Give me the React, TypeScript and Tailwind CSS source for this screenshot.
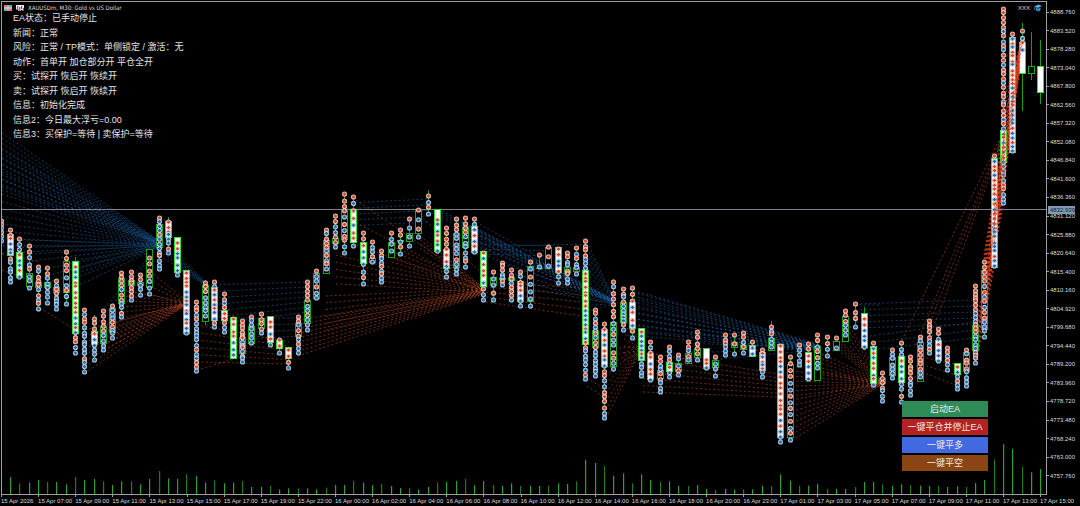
import React from "react";

type Body = "none" | "bull" | "bear";
// [first marker, last marker, body top, body bottom, body kind, marker step]
type Candle = [number, number, number, number, Body, number];

const STEP = 9.28;
const ORIGIN = 1.3;
const BASE = 494;
const xOf = (i: number) => ORIGIN + STEP * i;

const candles: Candle[] = [
  [221, 241, 0, 0, "none", 4],
  [230, 282, 234, 255, "bear", 4.6],
  [239, 277, 252, 277, "bear", 5],
  [246, 288, 273, 286, "bull", 5.5],
  [267, 309, 282, 287, "bull", 4.6],
  [268, 303, 282, 287, "bull", 5],
  [281, 309, 287, 292, "bull", 4],
  [252, 304, 261, 292, "bull", 6.4],
  [267, 353, 261, 333, "bear", 4.8],
  [310, 372, 0, 0, "none", 4.4],
  [319, 360, 331, 344, "bear", 5],
  [311, 350, 326, 343, "bull", 4.6],
  [306, 338, 308, 332, "bull", 4],
  [273, 317, 278, 303, "bull", 4.4],
  [272, 300, 280, 285, "bull", 4],
  [275, 295, 282, 285, "bull", 5],
  [258, 294, 249, 287, "bull", 6],
  [218, 269, 224, 247, "bull", 4],
  [222, 253, 221, 237, "bear", 4],
  [243, 275, 237, 272, "bear", 4.8],
  [273, 333, 270, 333, "bear", 4.6],
  [302, 371, 0, 0, "none", 4.2],
  [283, 316, 285, 321, "bull", 4.6],
  [282, 327, 287, 320, "bear", 4.4],
  [294, 332, 310, 320, "bear", 4.4],
  [319, 355, 317, 358, "bear", 5.4],
  [321, 362, 337, 353, "bull", 3.4],
  [317, 343, 326, 343, "bull", 4],
  [314, 333, 318, 328, "bull", 4],
  [322, 345, 316, 342, "bear", 4.8],
  [340, 353, 340, 348, "bear", 5],
  [350, 368, 347, 358, "bear", 5],
  [317, 353, 323, 336, "bull", 4.4],
  [282, 330, 300, 323, "bull", 4.4],
  [271, 298, 273, 298, "bull", 4.6],
  [230, 269, 240, 273, "bull", 4],
  [216, 247, 238, 243, "bull", 4.8],
  [194, 253, 209, 239, "bull", 5.4],
  [197, 246, 209, 242, "bear", 6.6],
  [233, 284, 242, 263, "bear", 6],
  [242, 262, 258, 262, "bull", 5],
  [251, 282, 0, 0, "none", 3.8],
  [233, 251, 242, 257, "bull", 4.6],
  [230, 254, 240, 241, "bull", 5],
  [219, 246, 233, 241, "bull", 7],
  [210, 237, 209, 233, "bull", 8],
  [196, 214, 209, 209, "bull", 6],
  [220, 251, 209, 251, "bear", 4.6],
  [228, 277, 249, 268, "bear", 5.4],
  [219, 274, 233, 267, "bull", 5],
  [218, 267, 227, 247, "bull", 4.6],
  [219, 252, 226, 252, "bear", 5],
  [253, 300, 251, 286, "bear", 5.4],
  [272, 300, 277, 285, "bull", 6],
  [263, 285, 278, 279, "bull", 3.6],
  [270, 300, 277, 280, "bull", 3.8],
  [272, 306, 281, 301, "bear", 4.6],
  [262, 306, 266, 301, "bull", 7],
  [255, 267, 268, 268, "bull", 11],
  [247, 266, 247, 268, "bull", 9],
  [249, 283, 247, 272, "bear", 5],
  [253, 283, 267, 273, "bull", 3.8],
  [248, 274, 267, 271, "bull", 4.6],
  [241, 379, 270, 344, "bear", 4.6],
  [310, 376, 330, 347, "bull", 4],
  [324, 418, 329, 366, "bear", 5],
  [282, 369, 322, 366, "bull", 5.6],
  [289, 330, 302, 322, "bull", 4],
  [288, 338, 302, 328, "bear", 5.6],
  [332, 376, 328, 360, "bear", 4.2],
  [342, 380, 353, 379, "bear", 4.8],
  [357, 392, 370, 378, "bull", 4],
  [347, 377, 362, 371, "bear", 3.8],
  [355, 375, 363, 371, "bull", 5],
  [342, 360, 353, 363, "bull", 4],
  [332, 360, 348, 357, "bull", 5],
  [360, 368, 348, 368, "bear", 4],
  [357, 376, 360, 367, "bull", 6],
  [335, 355, 0, 0, "none", 4],
  [335, 354, 342, 347, "bull", 8],
  [333, 353, 345, 349, "bull", 4.6],
  [342, 354, 345, 356, "bear", 5.6],
  [350, 377, 352, 370, "bear", 3.8],
  [327, 347, 338, 350, "bull", 4],
  [346, 442, 344, 437, "bear", 5.2],
  [357, 440, 364, 437, "bull", 6],
  [345, 365, 0, 0, "none", 4.6],
  [344, 379, 352, 379, "bear", 5.6],
  [335, 368, 346, 380, "bull", 5],
  [337, 356, 0, 0, "none", 6],
  [338, 348, 341, 350, "bull", 9],
  [311, 335, 316, 341, "bull", 4.2],
  [304, 327, 0, 0, "none", 7],
  [319, 347, 313, 347, "bear", 5.2],
  [343, 385, 346, 383, "bear", 5.2],
  [373, 401, 378, 383, "bull", 4.6],
  [350, 378, 357, 375, "bull", 4.4],
  [343, 402, 356, 382, "bear", 5.4],
  [357, 395, 0, 0, "none", 4],
  [337, 377, 342, 381, "bull", 4.4],
  [321, 353, 0, 0, "none", 3.8],
  [329, 361, 340, 360, "bear", 5],
  [348, 370, 0, 0, "none", 3.8],
  [367, 389, 363, 374, "bear", 4.4],
  [350, 386, 352, 371, "bull", 4.2],
  [286, 363, 325, 350, "bull", 3.8],
  [262, 337, 270, 329, "bull", 5],
  [156, 266, 158, 267, "bear", 4.6],
  [9, 203, 130, 162, "bear", 4.6],
  [34, 151, 37, 152, "bear", 4.4],
  [31, 50, 42, 73, "bear", 6],
  [0, -1, 66, 73, "bull", 4],
  [0, -1, 66, 92, "bear", 4],
];

const wicks: Record<number, [number, number]> = {
  8: [257, 261], 10: [315, 362], 16: [249, 295], 18: [217, 254], 22: [280, 325],
  39: [231, 286], 46: [190, 215], 66: [279, 372], 68: [286, 340], 83: [321, 350],
  93: [307, 350], 110: [23, 111], 111: [32, 80], 112: [40, 104],
};

const volumes = [
  111, 130, 128, 120, 126, 126, 133, 111, 120, 117, 124, 135, 124, 124, 133, 117, 93, 115, 117, 103,
  108, 128, 121, 130, 128, 123, 141, 141, 137, 148, 145, 145, 145, 148, 143, 135, 135, 123, 128, 135,
  132, 138, 144, 144, 148, 141, 128, 126, 123, 117, 135, 123, 135, 138, 130, 138, 137, 138, 137, 130,
  132, 124, 60, 69, 79, 108, 100, 130, 103, 120, 126, 124, 138, 138, 135, 147, 150, 147, 148, 148,
  148, 137, 138, 103, 122, 137, 137, 132, 147, 147, 147, 141, 126, 126, 133, 137, 133, 135, 137, 138,
  138, 141, 139, 141, 129, 120, 58, 12, 26, 80, 97, 87,
].map((v) => 440 + v / 3);

type Side = "buy" | "sell";
// Lines spread evenly between two segments: x1, y1 range, x2, y2 range.
type Fan = [Side, number, number, number, number, number, number, number];

const fans: Fan[] = [
  ["buy", 2, 133, 190, 158, 240, 243, 12],
  ["buy", 2, 150, 253, 158, 243, 246, 15],
  ["buy", 22, 240, 262, 158, 244, 246, 4],
  ["buy", 40, 270, 285, 158, 246, 247, 3],
  ["buy", 68, 262, 290, 158, 246, 248, 4],
  ["buy", 96, 318, 325, 158, 246, 248, 2],
  ["buy", 160, 238, 256, 205, 281, 284, 5],
  ["buy", 178, 258, 268, 205, 283, 285, 4],
  ["sell", 85, 330, 373, 186, 303, 305, 8],
  ["sell", 104, 326, 350, 186, 303, 305, 5],
  ["sell", 122, 290, 318, 186, 302, 305, 6],
  ["sell", 150, 272, 294, 186, 300, 304, 4],
  ["sell", 40, 308, 310, 76, 330, 332, 1],
  ["sell", 2, 254, 270, 40, 262, 284, 2],
  ["buy", 206, 285, 325, 308, 282, 312, 7],
  ["buy", 230, 318, 340, 300, 318, 336, 4],
  ["sell", 197, 325, 362, 289, 342, 364, 6],
  ["sell", 197, 370, 371, 245, 356, 358, 1],
  ["sell", 298, 320, 356, 484, 290, 294, 9],
  ["sell", 326, 296, 330, 484, 289, 293, 6],
  ["sell", 336, 255, 284, 484, 289, 292, 5],
  ["sell", 356, 200, 245, 484, 288, 291, 3],
  ["sell", 392, 246, 262, 484, 288, 291, 4],
  ["sell", 420, 236, 248, 484, 288, 291, 4],
  ["sell", 420, 215, 222, 484, 275, 288, 1],
  ["buy", 346, 203, 226, 428, 199, 222, 5],
  ["buy", 438, 209, 216, 614, 300, 303, 4],
  ["buy", 457, 220, 236, 614, 300, 303, 5],
  ["buy", 476, 222, 252, 614, 300, 303, 6],
  ["buy", 503, 264, 284, 614, 301, 304, 4],
  ["buy", 587, 242, 312, 614, 299, 304, 12],
  ["buy", 476, 244, 254, 552, 246, 256, 3],
  ["buy", 500, 246, 247, 586, 244, 246, 1],
  ["sell", 486, 282, 302, 582, 288, 316, 5],
  ["sell", 606, 350, 418, 640, 346, 352, 9],
  ["sell", 624, 310, 360, 641, 343, 352, 8],
  ["sell", 587, 378, 386, 606, 390, 398, 2],
  ["buy", 625, 288, 335, 815, 343, 350, 9],
  ["buy", 634, 292, 332, 815, 344, 350, 7],
  ["buy", 690, 334, 362, 815, 346, 350, 4],
  ["buy", 770, 338, 346, 815, 347, 350, 3],
  ["buy", 855, 305, 306, 880, 305, 306, 1],
  ["sell", 643, 352, 392, 778, 374, 397, 7],
  ["sell", 792, 400, 440, 880, 383, 386, 8],
  ["sell", 792, 366, 396, 880, 382, 385, 7],
  ["sell", 818, 352, 372, 880, 381, 384, 5],
  ["sell", 838, 338, 350, 880, 380, 384, 5],
  ["sell", 850, 326, 346, 880, 378, 383, 4],
  ["buy", 856, 304, 328, 975, 300, 324, 5],
  ["buy", 870, 336, 350, 975, 322, 338, 3],
  ["sell", 902, 340, 344, 1003, 132, 134, 1],
  ["sell", 916, 345, 350, 1003, 134, 138, 1],
  ["sell", 930, 322, 336, 1003, 138, 142, 2],
  ["sell", 904, 372, 386, 924, 362, 370, 2],
  ["sell", 922, 357, 372, 958, 365, 386, 3],
  ["sell", 977, 320, 360, 995, 230, 262, 9],
  ["sell", 984, 255, 310, 1004, 136, 200, 14],
  ["sell", 995, 165, 250, 1021, 40, 60, 12],
  ["sell", 1004, 100, 180, 1022, 40, 52, 9],
  ["buy", 1003, 60, 150, 1013, 50, 130, 6],
];

const linesOf = ([side, x1, a1, b1, x2, a2, b2, n]: Fan) =>
  Array.from({ length: n }, (_, k) => {
    const t = n === 1 ? 0 : k / (n - 1);
    return { side, x1, y1: a1 + (b1 - a1) * t, x2, y2: a2 + (b2 - a2) * t };
  });

const noise = (a: number, b: number) => {
  const v = Math.sin(a * 12.9898 + b * 78.233) * 43758.5453;
  return v - Math.floor(v);
};

const markersOf = (c: Candle, i: number) => {
  const [first, last, , , , step] = c;
  const out: { y: number; side: Side }[] = [];
  const n = Math.floor((last - first) / step);
  if (last < first) return out;
  for (let k = 0; k <= n; k++) {
    const t = n === 0 ? 0 : k / n;
    const inner = k > 0 && k < n;
    const y = first + (last - first) * t + (inner ? (noise(i, k) - 0.5) * 2.4 : 0);
    const side: Side = k === 0 ? "sell" : k === n ? "buy" : noise(k, i + 3) > 0.25 + t * 0.5 ? "sell" : "buy";
    out.push({ y, side });
  }
  return out;
};

function Marker({ x, y, side }: { x: number; y: number; side: Side }) {
  const sell = side === "sell";
  return (
    <g>
      <circle cx={x} cy={y} r={2.6} fill={sell ? "#f0cfc4" : "#b8d6ee"} opacity={0.92} />
      <path
        d={`M${x - 1.7} ${y}h3.4M${x} ${y - 1.5}v3`}
        stroke={sell ? "#d2452c" : "#2468a8"}
        strokeWidth={1.3}
      />
    </g>
  );
}

function Chart() {
  return (
    <svg
      className="absolute inset-0 h-full w-full"
      viewBox="2 2 1044 492"
      preserveAspectRatio="none"
      role="img"
      aria-label="XAUUSDm M30"
    >
      <g strokeWidth={1} strokeDasharray="2 2.4" fill="none">
        {fans.flatMap(linesOf).map((l, k) => (
          <line
            key={k}
            x1={l.x1}
            y1={l.y1}
            x2={l.x2}
            y2={l.y2}
            stroke={l.side === "buy" ? "#1a5c9c" : l.x1 > 970 ? "#e0401c" : "#b04420"}
            opacity={l.x1 > 970 ? 0.85 : 0.66}
          />
        ))}
      </g>
      <g fill="#30a030">
        {volumes.map((y, k) => (
          <rect key={k} x={Math.round(xOf(k + 1) - 0.5)} y={y} width={1.2} height={BASE - y} opacity={k % 3 === 1 ? 0.75 : 1} />
        ))}
      </g>
      <line x1={1} x2={1047} y1={209.5} y2={209.5} stroke="#7c8088" />
      {candles.map((c, i) => {
        const x = Math.round(xOf(i) - 0.5) + 0.5;
        const [first, last, top, bottom, kind] = c;
        const [w1, w2] = wicks[i] ?? [last > first ? first - 1 : top, last > first ? last + 2 : bottom];
        return (
          <g key={i}>
            <line x1={x} x2={x} y1={w1} y2={w2} stroke="#169c16" />
            {kind !== "none" && (
              <g>
                <rect
                  x={x - 3.5}
                  y={top}
                  width={7}
                  height={Math.max(bottom - top + 1, 1)}
                  fill={kind === "bear" ? "#2fe02f" : "#1ca41c"}
                />
                {bottom - top > 1 && (
                  <rect
                    x={x - 2.5}
                    y={top + 1}
                    width={5}
                    height={bottom - top - 1}
                    fill={kind === "bear" ? "#ffffff" : "#000000"}
                  />
                )}
              </g>
            )}
            {markersOf(c, i).map((m, k) => (
              <Marker key={k} x={x} y={m.y} side={m.side} />
            ))}
          </g>
        );
      })}
      <g stroke="#e2451c" strokeDasharray="2 2" opacity={0.8}>
        <path d="M978 335L1004 140M986 300L1005 130M990 262L1006 122M994 245L1016 90M996 215L1021 45M1000 180L1021 42M1006 150L1022 44" fill="none" />
      </g>
    </svg>
  );
}

const statusLines = [
  "EA状态：已手动停止",
  "新闻：正常",
  "风险：正常 / TP模式：单侧锁定 / 激活：无",
  "动作：首单开 加仓部分开 平仓全开",
  "买：试探开 恢启开 恢续开",
  "卖：试探开 恢启开 恢续开",
  "信息：初始化完成",
  "信息2：今日最大浮亏=0.00",
  "信息3：买保护=等待 | 卖保护=等待",
];

const actions = [
  { label: "启动EA", tone: "bg-[#2e8b57]" },
  { label: "一键平仓并停止EA", tone: "bg-[#b22222]" },
  { label: "一键平多", tone: "bg-[#4169e1]" },
  { label: "一键平空", tone: "bg-[#8b4513]" },
];

const prices = Array.from({ length: 26 }, (_, k) => (4888.76 - 5.24 * k).toFixed(3));

const times = [
  "15 Apr 2026", "15 Apr 07:00", "15 Apr 09:00", "15 Apr 11:00", "15 Apr 13:00", "15 Apr 15:00",
  "15 Apr 17:00", "15 Apr 19:00", "15 Apr 22:00", "16 Apr 00:00", "16 Apr 02:00", "16 Apr 04:00",
  "16 Apr 06:00", "16 Apr 08:00", "16 Apr 10:00", "16 Apr 12:00", "16 Apr 14:00", "16 Apr 16:00",
  "16 Apr 18:00", "16 Apr 20:00", "16 Apr 23:00", "17 Apr 01:00", "17 Apr 03:00", "17 Apr 05:00",
  "17 Apr 07:00", "17 Apr 09:00", "17 Apr 11:00", "17 Apr 13:00", "17 Apr 15:00",
];

export default function App() {
  return (
    <main className="grid h-screen grid-cols-[minmax(0,1fr)_33px] grid-rows-[minmax(0,1fr)_11px] overflow-hidden bg-black pt-px pl-px font-['Liberation_Sans',sans-serif] text-[6px] leading-[8px] text-[#dcdcdc]">
      <section className="relative border border-[#a0a0a0]">
        <Chart />
        <div className="relative flex h-full flex-col justify-between">
          <div>
            <header className="flex h-[11px] items-center justify-between pr-1 pl-0.5">
              <div className="flex items-center gap-1">
                <svg className="h-2 w-2" viewBox="0 0 8 8" aria-hidden="true">
                  <rect y="1" width="8" height="6" fill="#f0e4e0" />
                  <path d="M0 1h3.700v2.600H0zM4.300 4.400H8V7H4.300z" fill="#d87868" />
                  <path d="M4.300 1H8v2.600H4.300zM0 4.400h3.700V7H0z" fill="#6ca4cc" />
                </svg>
                <svg className="h-2 w-2" viewBox="0 0 8 8" aria-hidden="true">
                  <rect y="1" width="8" height="6" fill="#f0f0f0" />
                  <path d="M1 2h1.200v3H1zM3.200 3h1.200v4H3.200z" fill="#d23a28" />
                  <path d="M5 2h1.200v3H5zM7 4h1v3H7z" fill="#2470b0" />
                  <path d="M0 5.500h2.400V7H0zM5 6h1.500v1H5z" fill="#000" />
                </svg>
                <h1 className="font-['DejaVu_Sans_Condensed','Noto_Sans',sans-serif] text-[6px] whitespace-nowrap">XAUUSDm, M30: Gold vs US Dollar</h1>
              </div>
              <div className="flex items-center gap-1">
                <span>XXX</span>
                <svg className="h-2 w-2" viewBox="0 0 8 8" aria-hidden="true">
                  <path d="M0 2.500L4.500 .5 8 2 4 4z" fill="#5aaee8" />
                  <path d="M2 3.800L4 4.600 6.500 3.400V6.500L4.500 7.500 2 6.500z" fill="#2f86c8" />
                  <path d="M.8 3v3" stroke="#5aaee8" strokeWidth=".8" />
                </svg>
              </div>
            </header>
            <ul className="ml-[11px] flex h-[127px] flex-col justify-between font-['Liberation_Sans','Noto_Sans_CJK_SC',sans-serif] text-[9px] leading-[11px] text-[#e4e4e4]">
              {statusLines.map((line) => (
                <li key={line}>{line}</li>
              ))}
            </ul>
          </div>
          <div className="mr-[58px] mb-[23px] flex w-[86px] flex-col gap-0.5 self-end font-['Liberation_Sans','Noto_Sans_CJK_SC',sans-serif]">
            {actions.map((a) => (
              <button key={a.label} type="button" className={`${a.tone} h-4 text-[9px] leading-4 whitespace-nowrap text-[#f0e8e0]`}>
                {a.label}
              </button>
            ))}
          </div>
        </div>
      </section>

      <aside className="relative pt-[7px] pb-[15px]">
        <ol className="flex h-full flex-col justify-between">
          {prices.map((p) => (
            <li key={p} className="flex items-center gap-px">
              <span className="h-px w-0.5 bg-[#a0a0a0]" />
              {p}
            </li>
          ))}
        </ol>
        <span className="absolute top-[205px] left-px h-2 w-[27px] bg-[#8098b4] pl-0.5 text-[#101c2c]">4832.939</span>
      </aside>

      <ol className="col-span-2 flex whitespace-nowrap">
        {times.map((t) => (
          <li key={t} className="w-0 flex-[0_0_3.44%]">
            <span className="block h-0.5 w-px bg-[#a0a0a0]" />
            {t}
          </li>
        ))}
      </ol>
    </main>
  );
}
